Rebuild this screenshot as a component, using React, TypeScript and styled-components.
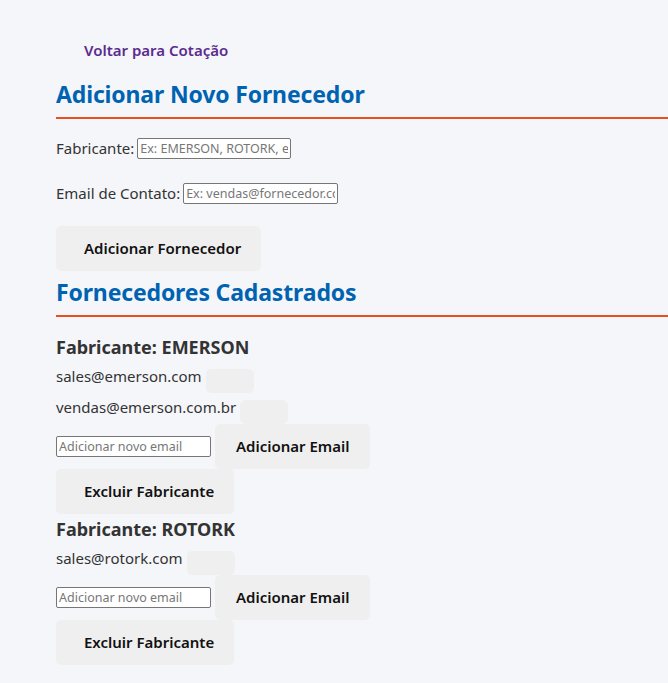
import React from "react";
import styled, { createGlobalStyle } from "styled-components";

const Global = createGlobalStyle`
  html, body { margin: 0; padding: 0; background: #f5f6fa; }
  body { font-family: "Noto Sans", "Open Sans", sans-serif; color: #333; overflow: hidden; }
  * { box-sizing: border-box; }
`;

const Page = styled.div`
  padding: 28px 0 0 56px;
  display: flex;
  flex-direction: column;
  align-items: flex-start;
  min-height: 683px;
`;

const Button = styled.button<{ $variant?: "link" | "default"; $lead?: boolean }>`
  font-family: inherit;
  font-size: 15px;
  font-weight: 600;
  line-height: 21px;
  padding: 12px 20px 12px ${(p) => (p.$lead ? "28px" : "21px")};
  border: none;
  border-radius: 5px;
  background: ${(p) => (p.$variant === "link" ? "transparent" : "#efefef")};
  color: ${(p) => (p.$variant === "link" ? "#5b2c8f" : "#111")};
  cursor: pointer;
  white-space: nowrap;
`;

const SectionTitle = styled.h2`
  align-self: stretch;
  margin: 5px 0 0;
  padding-bottom: 7px;
  font-size: 23px;
  letter-spacing: -0.15px;
  line-height: 32px;
  font-weight: 700;
  color: #0063b1;
  border-bottom: 2px solid #e8501e;
`;

const Form = styled.div`
  display: flex;
  flex-direction: column;
  align-items: flex-start;
  gap: 23px;
  margin-top: 18px;
`;

const Field = styled.label`
  display: flex;
  align-items: center;
  gap: 3px;
  font-size: 15px;
  line-height: 22px;
  color: #333;
`;

const TextInput = styled.input<{ $w: number }>`
  width: ${(p) => p.$w}px;
  height: 21px;
  padding: 1px 2px;
  font-family: inherit;
  font-size: 12.5px;
  border: 1px solid #767676;
  border-radius: 2px;
  background: #fff;
  color: #333;
  &::placeholder { color: #777; }
`;

const FormActions = styled.div`
  margin-top: -1px;
`;

const VendorList = styled.div`
  display: flex;
  flex-direction: column;
  gap: 3px;
  margin-top: 18px;
`;

const Vendor = styled.div`
  display: flex;
  flex-direction: column;
  align-items: flex-start;
`;

const VendorName = styled.h3`
  margin: 0 0 10px;
  font-size: 18px;
  line-height: 24px;
  font-weight: 700;
  color: #333;
`;

const EmailList = styled.div`
  display: flex;
  flex-direction: column;
  gap: 7px;
`;

const EmailRow = styled.div`
  display: flex;
  align-items: flex-start;
  gap: 4px;
`;

const EmailText = styled.span`
  font-size: 15px;
  line-height: 14px;
  color: #333;
`;

const RemoveButton = styled.button`
  width: 48px;
  height: 24px;
  border: none;
  border-radius: 5px;
  background: #efefef;
  padding: 0;
  cursor: pointer;
`;

const AddRow = styled.div`
  display: flex;
  align-items: center;
  gap: 4px;
`;

const vendors = [
  { name: "EMERSON", emails: ["sales@emerson.com", "vendas@emerson.com.br"] },
  { name: "ROTORK", emails: ["sales@rotork.com"] },
];

export default function App() {
  return (
    <>
      <Global />
      <Page>
        <Button $variant="link" $lead>Voltar para Cotação</Button>
        <SectionTitle>Adicionar Novo Fornecedor</SectionTitle>
        <Form>
          <Field>
            Fabricante:
            <TextInput $w={154} placeholder="Ex: EMERSON, ROTORK, etc." />
          </Field>
          <Field>
            Email de Contato:
            <TextInput $w={155} placeholder="Ex: vendas@fornecedor.com" />
          </Field>
          <FormActions>
            <Button $lead>Adicionar Fornecedor</Button>
          </FormActions>
        </Form>
        <SectionTitle>Fornecedores Cadastrados</SectionTitle>
        <VendorList>
          {vendors.map((v) => (
            <Vendor key={v.name}>
              <VendorName>Fabricante: {v.name}</VendorName>
              <EmailList>
                {v.emails.map((e) => (
                  <EmailRow key={e}>
                    <EmailText>{e}</EmailText>
                    <RemoveButton aria-label="Remover" />
                  </EmailRow>
                ))}
              </EmailList>
              <AddRow>
                <TextInput $w={155} placeholder="Adicionar novo email" />
                <Button>Adicionar Email</Button>
              </AddRow>
              <Button $lead>Excluir Fabricante</Button>
            </Vendor>
          ))}
        </VendorList>
      </Page>
    </>
  );
}
